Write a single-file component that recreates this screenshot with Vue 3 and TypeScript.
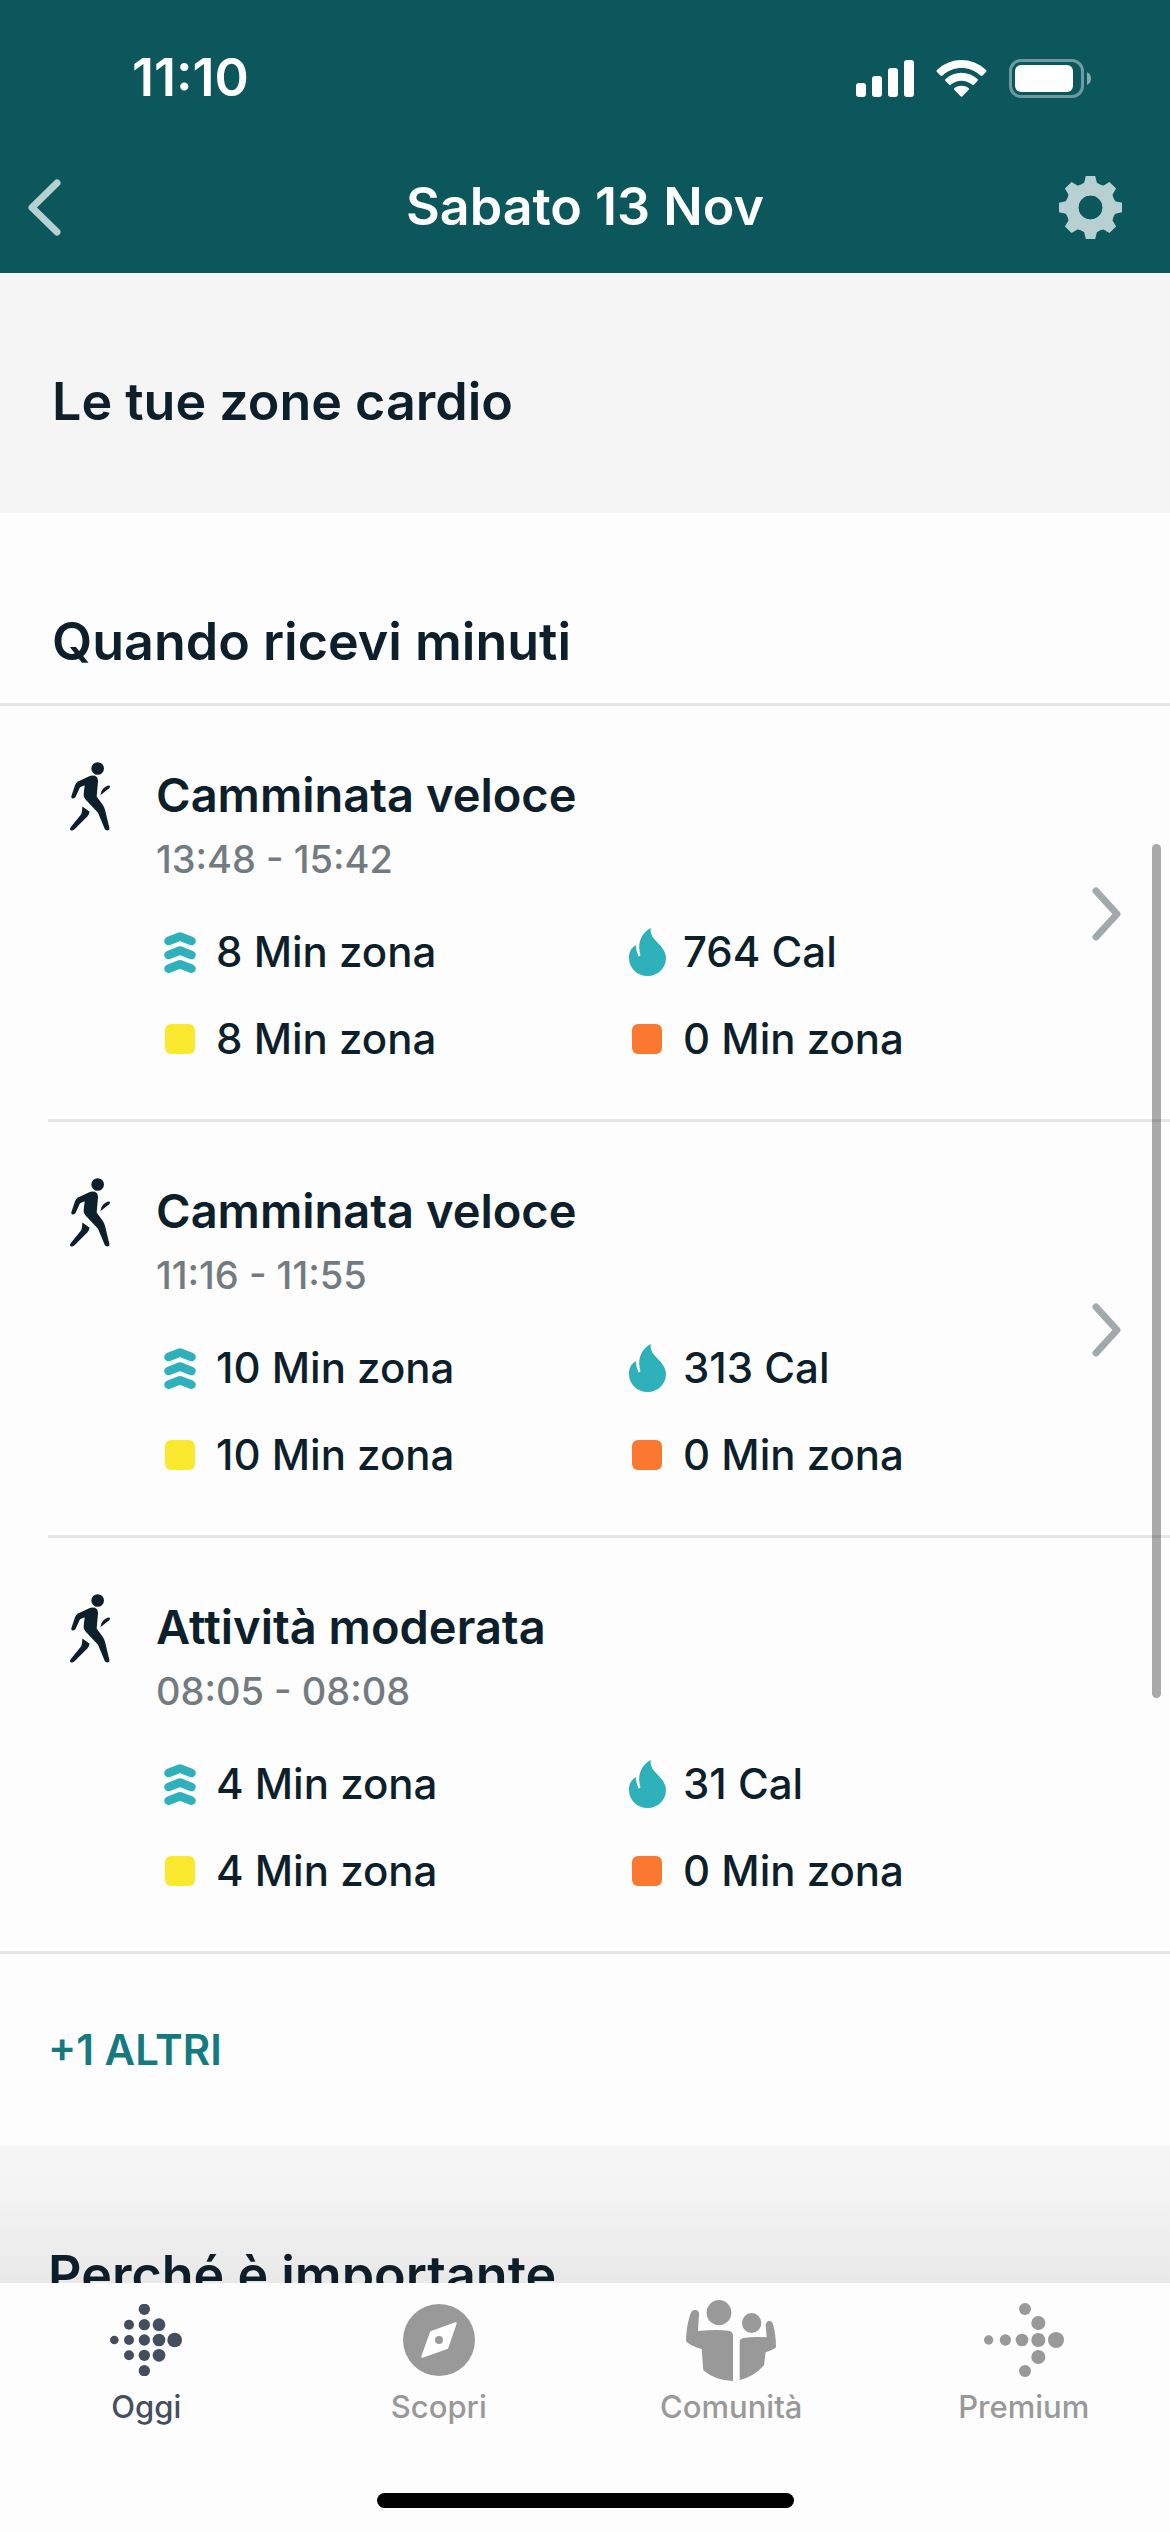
<script setup lang="ts">
interface Activity {
  name: string
  time: string
  zone: number
  calories: number
  fatBurn: number
  cardio: number
  linked: boolean
}

interface Tab {
  id: string
  label: string
}

type Dot = [x: number, y: number, r: number]

const activities: Activity[] = [
  { name: 'Camminata veloce', time: '13:48 - 15:42', zone: 8, calories: 764, fatBurn: 8, cardio: 0, linked: true },
  { name: 'Camminata veloce', time: '11:16 - 11:55', zone: 10, calories: 313, fatBurn: 10, cardio: 0, linked: true },
  { name: 'Attività moderata', time: '08:05 - 08:08', zone: 4, calories: 31, fatBurn: 4, cardio: 0, linked: false },
]

const tabs: Tab[] = [
  { id: 'today', label: 'Oggi' },
  { id: 'discover', label: 'Scopri' },
  { id: 'community', label: 'Comunità' },
  { id: 'premium', label: 'Premium' },
]

const todayDots: Dot[] = [
  [13, 108, 13],
  [57, 62, 15], [57, 108, 15], [57, 154, 15],
  [103, 16, 17], [103, 62, 17], [103, 108, 17], [103, 154, 17], [103, 200, 17],
  [147, 62, 19], [147, 108, 19], [147, 154, 19],
  [194, 108, 22],
]

const premiumDots: Dot[] = [
  [14, 111, 14], [64, 111, 17], [114, 111, 19], [163, 111, 21], [216, 111, 24],
  [163, 60, 21], [123, 18, 18], [163, 162, 21], [123, 204, 18],
]

const gearTeeth = [0, 45, 90, 135, 180, 225, 270, 315]
</script>

<template>
  <div class="screen">
    <header class="header">
      <div class="status">
        <time class="clock">11:10</time>
        <div class="indicators">
          <svg width="58" height="37" viewBox="0 0 58 37" fill="#fff" aria-hidden="true">
            <rect x="0" y="23" width="10" height="14" rx="3" />
            <rect x="16" y="16" width="10" height="21" rx="3" />
            <rect x="32" y="8" width="10" height="29" rx="3" />
            <rect x="48" y="0" width="10" height="37" rx="3" />
          </svg>
          <svg width="51" height="37" viewBox="0 0 51 37" fill="#fff" aria-hidden="true">
            <path d="M1 10C15 -3.300 36 -3.300 50 10Q51 11 50 12L46.500 15.500Q45.500 16.500 44.500 15.500C34 5.500 17 5.500 6.500 15.500Q5.500 16.500 4.500 15.500L1 12Q0 11 1 10Z" />
            <path d="M9.500 19C19 10.600 32 10.600 41.500 19Q42.500 20 41.500 21L38 24.500Q37 25.500 36 24.500C30 19.400 21 19.400 15 24.500Q14 25.500 13 24.500L9.500 21Q8.500 20 9.500 19Z" />
            <path d="M18.500 28C22.500 25 28.500 25 32.500 28Q33.500 29 32.500 30L26.500 36.300Q25.500 37.200 24.500 36.300L18.500 30Q17.500 29 18.500 28Z" />
          </svg>
          <svg width="83" height="39" viewBox="0 0 83 39" aria-hidden="true">
            <rect x="1.500" y="1.500" width="72" height="36" rx="10.500" fill="none" stroke="#fff" stroke-opacity=".4" stroke-width="3" />
            <rect x="6" y="6" width="58" height="27" rx="6" fill="#fff" />
            <path d="M78 13Q82 15 82 19.500T78 26Z" fill="#fff" fill-opacity=".5" />
          </svg>
        </div>
      </div>
      <div class="nav-bar">
        <button class="icon-button back" type="button" aria-label="Indietro">
          <svg width="33" height="57" viewBox="0 0 33 57" fill="none" stroke="#b7d0d2" stroke-width="7" stroke-linecap="round" stroke-linejoin="round">
            <path d="M29 4L4 28.500L29 53" />
          </svg>
        </button>
        <h1 class="title">Sabato 13 Nov</h1>
        <button class="icon-button settings" type="button" aria-label="Impostazioni">
          <svg width="63" height="63" viewBox="-94 -94 188 188" fill="#b7d0d2">
            <path
              v-for="angle in gearTeeth"
              :key="angle"
              :transform="`rotate(${angle})`"
              d="M-14 -94H14L19 -74Q24 -68 36 -66V-50H-36V-66Q-24 -68 -19 -74Z"
            />
            <circle r="53" fill="none" stroke="#b7d0d2" stroke-width="36" />
            <circle r="35" fill="#0b575c" />
          </svg>
        </button>
      </div>
    </header>

    <main class="content">
      <section class="band">
        <h2 class="heading">Le tue zone cardio</h2>
      </section>

      <section class="log">
        <h2 class="heading log-heading">Quando ricevi minuti</h2>
        <ul class="activities">
          <li v-for="activity in activities" :key="activity.time" class="activity-item">
            <component :is="activity.linked ? 'a' : 'div'" class="activity" :href="activity.linked ? '#' : undefined">
              <svg class="walker" width="40" height="69" viewBox="60 35 120 206" fill="#0d1f2b" aria-hidden="true">
                <circle cx="143" cy="54" r="19" />
                <path d="M64 137L75 104Q78 97 84 93L116 78Q126 73 134 76Q144 80 144 92L140 138L158 163Q163 170 165 178L178 232Q179 240 172 240Q166 240 164 235L144 187L106 146Q100 140 101 130L104 104L90 110L77 139Q74 145 68 144Q62 142 64 137Z" />
                <path d="M97 168L119 184Q117 193 112 198L73 237Q67 242 62 239Q58 236 62 230L90 196Q95 190 96 182Z" />
                <path d="M151 134Q153 120 162 112L172 106Q180 103 180 109Q180 114 173 117Z" />
              </svg>
              <div class="details">
                <h3 class="name">{{ activity.name }}</h3>
                <p class="time">{{ activity.time }}</p>
                <div class="stats">
                  <div class="stat">
                    <span class="stat-icon">
                      <svg width="32" height="41" viewBox="0 0 32 41" fill="none" stroke="#2fb1bb" stroke-width="8.500" stroke-linecap="round" stroke-linejoin="round" aria-hidden="true">
                        <path d="M4.500 9L16 4.500L27.500 9M4.500 23L16 18.500L27.500 23M4.500 36.700L16 32.200L27.500 36.700" />
                      </svg>
                    </span>
                    {{ activity.zone }} Min zona
                  </div>
                  <div class="stat">
                    <span class="stat-icon">
                      <svg width="37" height="48" viewBox="0 0 37 48" fill="#2fb1bb" aria-hidden="true">
                        <path d="M21.500 0C21.500 7 24 10 28 14C33 19 37 24 37 30C37 40 29 48 18.500 48C8 48 0 40 0 30C0 24 2 20 7 17C7 21 8 25 9.500 28.500L11.500 27.500C10 22 10 18 10.500 15C12 8 16 3 21.500 0Z" />
                      </svg>
                    </span>
                    {{ activity.calories }} Cal
                  </div>
                  <div class="stat">
                    <span class="stat-icon"><i class="swatch fat-burn"></i></span>
                    {{ activity.fatBurn }} Min zona
                  </div>
                  <div class="stat">
                    <span class="stat-icon"><i class="swatch cardio"></i></span>
                    {{ activity.cardio }} Min zona
                  </div>
                </div>
              </div>
              <svg v-if="activity.linked" class="chevron" width="30" height="54" viewBox="0 0 30 54" fill="none" stroke="#a1a9ac" stroke-width="7" stroke-linecap="round" stroke-linejoin="round" aria-hidden="true">
                <path d="M4 4L25 27L4 50" />
              </svg>
            </component>
          </li>
        </ul>
        <button class="more" type="button">+1 ALTRI</button>
      </section>

      <section class="band why">
        <h2 class="heading">Perché è importante</h2>
      </section>

      <div class="fade"></div>
      <div class="scroll-thumb"></div>
    </main>

    <footer class="footer">
      <nav class="tabs">
        <a v-for="tab in tabs" :key="tab.id" href="#" class="tab" :class="{ active: tab.id === 'today' }">
          <span class="tab-icon">
            <svg v-if="tab.id === 'today'" width="72" height="72" viewBox="0 0 216 216" fill="currentColor" aria-hidden="true">
              <circle v-for="([x, y, r], i) in todayDots" :key="i" :cx="x" :cy="y" :r="r" />
            </svg>
            <svg v-else-if="tab.id === 'discover'" width="72" height="72" viewBox="0 0 216 216" aria-hidden="true">
              <circle cx="108" cy="108" r="108" fill="currentColor" />
              <path d="M82 82L157 55Q162 54 161 59L135 134L59 161Q54 162 55 157Z" fill="#fff" />
              <circle cx="108" cy="108" r="12" fill="currentColor" />
            </svg>
            <svg v-else-if="tab.id === 'community'" width="90" height="81" viewBox="0 0 270 243" fill="currentColor" aria-hidden="true">
              <ellipse cx="99" cy="38" rx="37" ry="38" />
              <ellipse cx="197" cy="69" rx="29" ry="30" />
              <path d="M12 46Q16 30 27 30Q39 30 39 42L36 93Q90 88 127 92Q141 94 141 106V243Q90 243 52 211L47 147Q10 137 0 123Q0 85 12 46Z" />
              <path d="M161 127Q161 115 173 114Q205 109 242 112L239 75Q241 63 250 63Q258 63 261 73Q270 105 270 142Q262 150 239 157L234 196Q202 232 161 240Z" />
            </svg>
            <svg v-else width="80" height="74" viewBox="0 0 240 222" fill="currentColor" aria-hidden="true">
              <circle v-for="([x, y, r], i) in premiumDots" :key="i" :cx="x" :cy="y" :r="r" />
            </svg>
          </span>
          {{ tab.label }}
        </a>
      </nav>
      <div class="home-indicator"></div>
    </footer>
  </div>
</template>

<style>
body {
  margin: 0;
}
</style>

<style scoped>
.screen {
  display: flex;
  flex-direction: column;
  height: 100vh;
  background: #fdfdfd;
  color: #0d1f2b;
  font-family: Inter, "Liberation Sans", sans-serif;
}

h1,
h2,
h3,
p,
ul {
  margin: 0;
  padding: 0;
  font-weight: 600;
}

svg {
  display: block;
}

button {
  padding: 0;
  border: 0;
  background: none;
  font: inherit;
  color: inherit;
}

a {
  color: inherit;
  text-decoration: none;
}

.header {
  flex: none;
  background: #0b575c;
  color: #fff;
}

.status {
  display: flex;
  align-items: center;
  justify-content: space-between;
  padding: 48px 78px 0 132px;
}

.clock {
  font-size: 52px;
  line-height: 60px;
  font-weight: 600;
}

.indicators {
  display: flex;
  align-items: center;
  gap: 22px;
}

.nav-bar {
  display: flex;
  align-items: center;
  justify-content: space-between;
  height: 132px;
  margin-top: 33px;
}

.title {
  font-size: 52px;
  line-height: 64px;
}

.icon-button {
  display: flex;
  width: 112px;
}

.back {
  padding-left: 28px;
}

.settings {
  justify-content: flex-end;
  padding-right: 48px;
}

.content {
  position: relative;
  flex: 1;
  min-height: 0;
  overflow: hidden;
}

.band {
  padding: 97px 52px 79px;
  background: #f5f5f5;
}

.why {
  padding-left: 48px;
}

.heading {
  font-size: 52px;
  line-height: 64px;
}

.log-heading {
  padding: 97px 52px 29px;
}

.activities {
  list-style: none;
  border-top: 3px solid #e6e6e6;
  border-bottom: 3px solid #e6e6e6;
}

.activity-item + .activity-item {
  margin-left: 48px;
  border-top: 3px solid #e6e6e6;
}

.activity-item + .activity-item .activity {
  padding-left: 22px;
}

.activity {
  display: flex;
  align-items: flex-start;
  padding: 53px 48px 50px 70px;
}

.walker {
  flex: none;
  margin-top: 3px;
}

.details {
  flex: 1;
  margin-left: 46px;
}

.name {
  font-size: 47px;
  line-height: 72px;
}

.time {
  font-size: 38px;
  line-height: 56px;
  font-weight: 500;
  color: #737b81;
}

.stats {
  display: grid;
  grid-template-columns: 467px 1fr;
  row-gap: 27px;
  margin-top: 35px;
}

.stat {
  display: flex;
  align-items: center;
  font-size: 42px;
  line-height: 60px;
  font-weight: 500;
}

.stat-icon {
  display: flex;
  justify-content: center;
  width: 48px;
  margin-right: 12px;
}

.swatch {
  width: 30px;
  height: 30px;
  border-radius: 6px;
}

.fat-burn {
  background: #f9e82d;
}

.cardio {
  background: #fa782f;
}

.chevron {
  flex: none;
  align-self: center;
}

.more {
  display: block;
  padding: 66px 48px;
  font-size: 42px;
  line-height: 60px;
  font-weight: 600;
  color: #147a80;
}

.fade {
  position: absolute;
  right: 0;
  bottom: 0;
  left: 0;
  height: 112px;
  background: linear-gradient(rgba(0, 0, 0, 0), rgba(0, 0, 0, 0.05));
}

.scroll-thumb {
  position: absolute;
  top: 571px;
  right: 9px;
  width: 9px;
  height: 854px;
  border-radius: 5px;
  background: rgba(0, 0, 0, 0.33);
}

.footer {
  flex: none;
  background: #fdfdfd;
}

.tabs {
  display: flex;
}

.tab {
  display: flex;
  flex: 1;
  flex-direction: column;
  align-items: center;
  font-size: 31px;
  line-height: 40px;
  font-weight: 500;
  color: #999;
}

.tab.active {
  color: #454e5e;
}

.tab-icon {
  display: flex;
  align-items: center;
  height: 114px;
  margin-bottom: -10px;
}

.home-indicator {
  width: 417px;
  height: 15px;
  margin: 66px auto 24px;
  border-radius: 8px;
  background: #000;
}
</style>
